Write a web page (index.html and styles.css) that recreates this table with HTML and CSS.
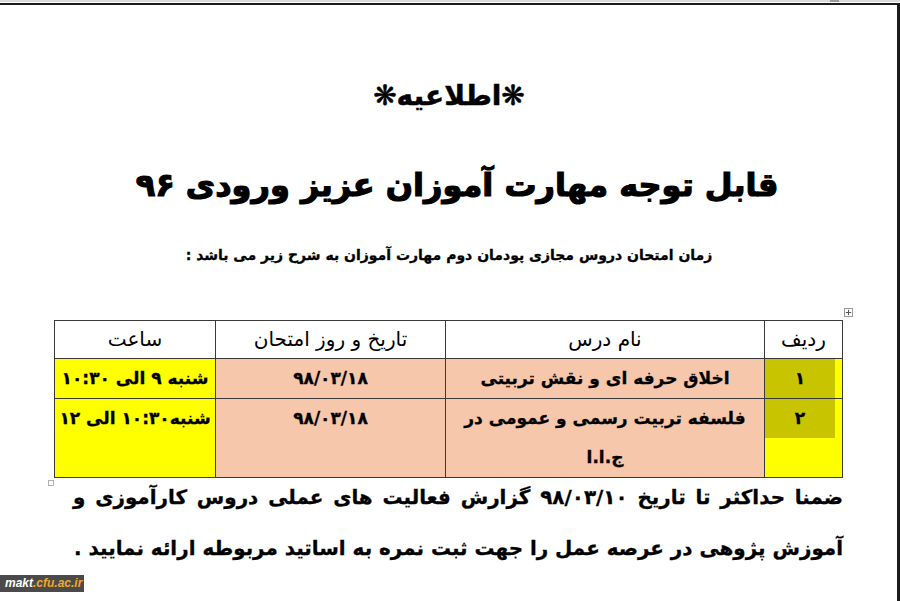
FILE: index.html
```html
<!DOCTYPE html>
<html lang="fa" dir="rtl">
<head>
<meta charset="utf-8">
<title>اطلاعیه</title>
<link rel="stylesheet" href="styles.css">
</head>
<body>
<div class="chrome"><span class="chrome-grip"></span></div>
<div class="page">
  <h2 class="notice">❋اطلاعیه❋</h2>
  <h1 class="title">قابل توجه مهارت آموزان عزیز ورودی ۹۶</h1>
  <p class="sub">زمان امتحان دروس مجازی پودمان دوم مهارت آموزان به شرح زیر می باشد :</p>
  <div class="table-wrap">
    <span class="move-handle"><svg width="9" height="9" viewBox="0 0 9 9"><rect x="0.5" y="0.5" width="8" height="8" fill="#fff" stroke="#9a9a9a"/><path d="M4.5 1.8v5.4M1.8 4.5h5.4" stroke="#555" stroke-width="1"/></svg></span>
    <table class="exam">
      <colgroup><col class="c-no"><col class="c-name"><col class="c-date"><col class="c-time"></colgroup>
      <thead>
        <tr><th>ردیف</th><th>نام درس</th><th>تاریخ و روز امتحان</th><th>ساعت</th></tr>
      </thead>
      <tbody>
        <tr class="r1">
          <td class="no"><div class="hl">۱</div></td>
          <td class="peach">اخلاق حرفه ای و نقش تربیتی</td>
          <td class="peach">۹۸/۰۳/۱۸</td>
          <td class="yellow">شنبه ۹ الی ۱۰:۳۰</td>
        </tr>
        <tr class="r2">
          <td class="no"><div class="hl">۲</div></td>
          <td class="peach">فلسفه تربیت رسمی و عمومی در ج.ا.ا</td>
          <td class="peach">۹۸/۰۳/۱۸</td>
          <td class="yellow">شنبه۱۰:۳۰ الی ۱۲</td>
        </tr>
      </tbody>
    </table>
    <span class="resize-handle"></span>
  </div>
  <p class="note">ضمنا حداکثر تا تاریخ ۹۸/۰۳/۱۰ گزارش فعالیت های عملی دروس کارآموزی و آموزش پژوهی در عرصه عمل را جهت ثبت نمره به اساتید مربوطه ارائه نمایید .</p>
  <div class="badge"><span class="b1">makt</span><span class="b2">.cfu.ac.ir</span></div>
</div>
</body>
</html>
```

FILE: styles.css
```css
* { box-sizing: border-box; }
html, body { margin: 0; padding: 0; background: #fff; }
body {
  font-family: "DejaVu Sans", sans-serif;
  color: #000;
  direction: rtl;
  width: 900px;
  height: 601px;
  overflow: hidden;
}
.chrome {
  height: 3px;
  border-top: 2px solid #dadada;
  position: relative;
}
.chrome-grip {
  position: absolute;
  left: 830px;
  top: -2px;
  width: 9px;
  height: 2px;
  background: #9a9a9a;
}
.page {
  position: relative;
  width: 900px;
  height: 598px;
  border-top: 2px solid #1c1c1c;
  border-right: 3px solid #1c1c1c;
  padding: 0 54px 0 55px;
}
.notice {
  margin: 71px 0 0;
  font-size: 28px;
  line-height: 40px;
  font-weight: bold;
  text-align: center;
  -webkit-text-stroke: 0.5px #000;
}
.title {
  margin: 41px 0 0;
  padding-left: 16px;
  font-size: 32px;
  line-height: 56px;
  font-weight: bold;
  text-align: center;
  white-space: nowrap;
  -webkit-text-stroke: 1.2px #000;
}
.sub {
  margin: 30px 0 0;
  font-size: 14px;
  line-height: 24px;
  font-weight: bold;
  text-align: center;
  white-space: nowrap;
  -webkit-text-stroke: 0.3px #000;
}
.table-wrap {
  position: relative;
  margin-top: 53px;
}
.move-handle {
  position: absolute;
  right: -10px;
  top: -12px;
  width: 9px;
  height: 9px;
  line-height: 0;
}
.resize-handle {
  position: absolute;
  left: -7px;
  bottom: -8px;
  width: 6px;
  height: 6px;
  border: 1px solid #b0b0b0;
  background: #fff;
}
.exam {
  width: 788px;
  border-collapse: collapse;
  table-layout: fixed;
  direction: rtl;
}
.c-no { width: 78px; }
.c-name { width: 319px; }
.c-date { width: 230px; }
.c-time { width: 161px; }
.exam th, .exam td {
  border: 1px solid #3a3a3a;
  text-align: center;
  vertical-align: top;
  padding: 0 2px;
}
.exam th {
  height: 38px;
  font-size: 20px;
  line-height: 36px;
  font-weight: normal;
  background: #fff;
}
.exam td {
  font-size: 17px;
  line-height: 39px;
  font-weight: bold;
  -webkit-text-stroke: 0.3px #000;
}
.r1 td { height: 40px; }
.r2 td { height: 77px; }
.peach { background: #f6c7ab; }
.yellow { background: #ffff00; white-space: nowrap; }
.exam td.no {
  background: #ffff00;
  padding: 0 7px 0 0;
}
.hl {
  background: #c8c400;
  height: 39px;
  line-height: 39px;
}
.note {
  margin: -6px 0 0;
  padding-left: 18px;
  font-size: 19.9px;
  line-height: 51px;
  font-weight: bold;
  text-align: justify;
  -webkit-text-stroke: 0.3px #000;
}
.badge {
  position: absolute;
  left: 0;
  top: 570px;
  width: 84px;
  height: 17px;
  background: #4a4a4a;
  direction: ltr;
  font-family: "Liberation Sans", sans-serif;
  font-size: 12px;
  line-height: 17px;
  font-weight: bold;
  font-style: italic;
  padding-left: 5px;
  white-space: nowrap;
}
.b1 { color: #ffffff; }
.b2 { color: #f0a72a; }
```
